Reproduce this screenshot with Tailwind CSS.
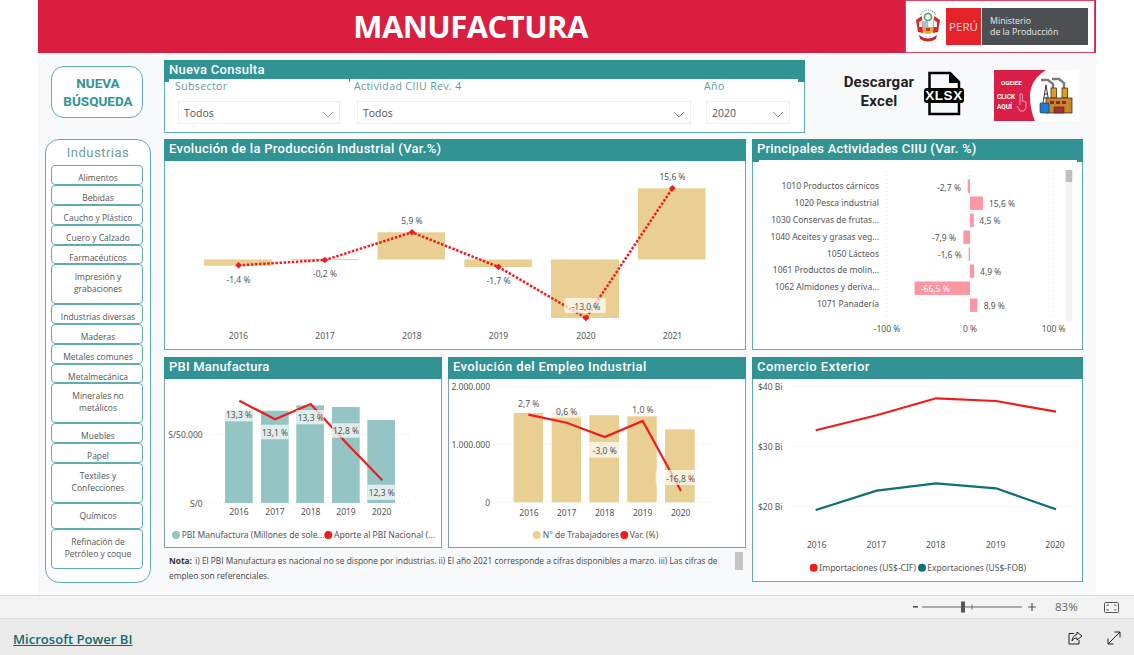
<!DOCTYPE html>
<html lang="es">
<head>
<meta charset="UTF-8">
<title>Manufactura</title>
<script src="https://cdn.jsdelivr.net/npm/@tailwindcss/browser@4"></script>
</head>
<body class="bg-white w-[1134px] h-[655px] overflow-hidden flex flex-col font-['Open_Sans',sans-serif] text-[#555]">

<main class="ml-[38px] w-[1058px] h-[595px] bg-[#f8f9fb] flex flex-col">
  <!-- header -->
  <header class="h-[53px] bg-[#d91e3f] flex items-center shrink-0">
    <h1 class="w-[865px] mr-[2px] text-center text-white font-bold text-[31px] tracking-[-0.55px] leading-none">MANUFACTURA</h1>
    <div class="w-[190px] h-[53px] bg-white border border-[#e2405c] flex items-center pl-[9px]">
      <svg width="26" height="38" viewBox="0 0 26 38">
        <path d="M5 7 A9 9 0 0 1 21 7" fill="none" stroke="#999" stroke-width="1.2" stroke-dasharray="1 1"/>
        <path d="M1 12 L7 8 L8 25 L3 24 Z" fill="#d9262c"/>
        <path d="M25 12 L19 8 L18 25 L23 24 Z" fill="#d9262c"/>
        <path d="M4 14 L7 12 V19 L4 19 Z" fill="#f4f4f4"/>
        <path d="M22 14 L19 12 V19 L22 19 Z" fill="#f4f4f4"/>
        <circle cx="13" cy="9" r="3.5" fill="none" stroke="#4f9a6a" stroke-width="1.6"/>
        <rect x="8" y="13" width="5" height="6" fill="#8fd0d8"/>
        <rect x="13" y="13" width="5" height="6" fill="#f3f3f3"/>
        <path d="M8 19 H18 V24 Q13 28 8 24 Z" fill="#e8a92c"/>
        <path d="M11 20 H15 V23 H11 Z" fill="#c9362c"/>
        <path d="M4 27 Q13 34 22 27 L21 31 Q13 36 5 31 Z" fill="#c9262c"/>
      </svg>
      <div class="ml-[5px] w-[35px] h-[37px] bg-[#e52228] text-[#fbd9d9] text-[11.5px] flex items-center justify-center">PERÚ</div>
      <div class="ml-[1px] w-[106px] h-[37px] bg-[#4d5052] text-[#e8e8e8] text-[8.8px] leading-[11px] flex flex-col justify-center pl-[8px]"><span>Ministerio</span><span>de la Producción</span></div>
    </div>
  </header>

  <div class="flex pl-[7px] gap-[13px]">
    <!-- left column -->
    <div class="w-[106px] flex flex-col items-center shrink-0">
      <button class="mt-[13px] -ml-[2px] w-[92px] h-[52px] rounded-[13px] border border-[#5fadad] bg-white text-[#319393] font-['Roboto',sans-serif] font-bold text-[13.5px] leading-[18px] pl-[2px]">NUEVA<br>BÚSQUEDA</button>
      <nav class="mt-[21px] w-[106px] h-[444px] rounded-[14px] border border-[#5fadad] bg-white flex flex-col items-center pr-[2px] text-[#555] text-[8.5px] leading-[12px]">
        <div class="h-[25px] pt-[5px] pl-[2px] text-[13px] leading-[16px] tracking-[0.5px] text-[#6f9c9c] font-['Roboto',sans-serif]">Industrias</div>
        <a class="w-[92px] h-[20px] shrink-0 border border-[#5fadad] rounded-[4px] text-center pt-[6px] pl-[2px]">Alimentos</a>
        <a class="w-[92px] h-[20px] shrink-0 border border-[#5fadad] rounded-[4px] text-center pt-[6px] pl-[2px]">Bebidas</a>
        <a class="w-[92px] h-[20px] shrink-0 border border-[#5fadad] rounded-[4px] text-center pt-[6px] pl-[2px]">Caucho y Plástico</a>
        <a class="w-[92px] h-[20px] shrink-0 border border-[#5fadad] rounded-[4px] text-center pt-[6px] pl-[2px]">Cuero y Calzado</a>
        <a class="w-[92px] h-[19px] shrink-0 border border-[#5fadad] rounded-[4px] text-center pt-[6px] pl-[2px]">Farmacéuticos</a>
        <a class="w-[92px] h-[40px] shrink-0 border border-[#5fadad] rounded-[4px] text-center pt-[6px] pl-[2px]">Impresión y<br>grabaciones</a>
        <a class="w-[92px] h-[20px] shrink-0 border border-[#5fadad] rounded-[4px] text-center pt-[6px] pl-[2px]">Industrias diversas</a>
        <a class="w-[92px] h-[20px] shrink-0 border border-[#5fadad] rounded-[4px] text-center pt-[6px] pl-[2px]">Maderas</a>
        <a class="w-[92px] h-[20px] shrink-0 border border-[#5fadad] rounded-[4px] text-center pt-[6px] pl-[2px]">Metales comunes</a>
        <a class="w-[92px] h-[19px] shrink-0 border border-[#5fadad] rounded-[4px] text-center pt-[6px] pl-[2px]">Metalmecánica</a>
        <a class="w-[92px] h-[40px] shrink-0 border border-[#5fadad] rounded-[4px] text-center pt-[6px] pl-[2px]">Minerales no<br>metálicos</a>
        <a class="w-[92px] h-[20px] shrink-0 border border-[#5fadad] rounded-[4px] text-center pt-[6px] pl-[2px]">Muebles</a>
        <a class="w-[92px] h-[20px] shrink-0 border border-[#5fadad] rounded-[4px] text-center pt-[6px] pl-[2px]">Papel</a>
        <a class="w-[92px] h-[40px] shrink-0 border border-[#5fadad] rounded-[4px] text-center pt-[6px] pl-[2px]">Textiles y<br>Confecciones</a>
        <a class="w-[92px] h-[26px] shrink-0 border border-[#5fadad] rounded-[4px] text-center pt-[6px] pl-[2px]">Químicos</a>
        <a class="w-[92px] h-[40px] shrink-0 border border-[#5fadad] rounded-[4px] text-center pt-[6px] pl-[2px]">Refinación de<br>Petróleo y coque</a>
      </nav>
    </div>

    <!-- right column -->
    <div class="w-[919px] pt-[7px] flex flex-col">
      <!-- row 1 -->
      <div class="flex h-[73px]">
        <section class="w-[641px] border border-[#5fadad] bg-white relative">
          <div class="h-[19px] -mt-px -mx-px bg-[#319393] text-white font-['Roboto',sans-serif] font-medium text-[13px] leading-[19px] tracking-[0.3px] pl-[5px]">Nueva Consulta</div>
          <!-- little header notches -->
          <div class="absolute left-[-1px] top-[18px] w-[5px] h-[3px] bg-[#319393]"></div>
          <div class="absolute left-[184px] top-[18px] w-[1px] h-[3px] bg-[#319393]"></div>
          <div class="absolute right-[-1px] top-[18px] w-[7px] h-[3px] bg-[#319393]"></div>
          <div class="flex text-[#5f9a9a] text-[10.5px] tracking-[0.4px]">
            <div class="w-[189px] pl-[10px]">
              <div class="h-[19px] leading-[14px]">Subsector</div>
              <div class="mt-[3px] ml-[3px] w-[162px] h-[23px] border border-[#eeeeee] flex items-center justify-between px-[5px] pt-[3px] text-[#555] tracking-normal">Todos
                <svg width="12" height="7" viewBox="0 0 12 7"><path d="M1 1 L6 6 L11 1" fill="none" stroke="#777" stroke-width="0.8"/></svg></div>
            </div>
            <div class="w-[350px]">
              <div class="h-[19px] leading-[14px]">Actividad CIIU Rev. 4</div>
              <div class="mt-[3px] ml-[3px] w-[334px] h-[23px] border border-[#eeeeee] flex items-center justify-between px-[5px] pt-[3px] text-[#555] tracking-normal">Todos
                <svg width="12" height="7" viewBox="0 0 12 7"><path d="M1 1 L6 6 L11 1" fill="none" stroke="#777" stroke-width="0.8"/></svg></div>
            </div>
            <div class="w-[90px]">
              <div class="h-[19px] leading-[14px]">Año</div>
              <div class="mt-[3px] ml-[2px] w-[84px] h-[23px] border border-[#eeeeee] flex items-center justify-between px-[5px] pt-[3px] text-[#555] tracking-normal">2020
                <svg width="12" height="7" viewBox="0 0 12 7"><path d="M1 1 L6 6 L11 1" fill="none" stroke="#777" stroke-width="0.8"/></svg></div>
            </div>
          </div>
        </section>
        <div class="w-[76px] ml-[36px] mt-[13px] text-center text-[#222] font-bold text-[15px] leading-[19px] font-['Roboto',sans-serif] tracking-[0.2px]">Descargar<br>Excel</div>
        <svg class="ml-[7px] mt-[11px]" width="40" height="45" viewBox="0 0 40 45">
          <path d="M5.5 18 V2 H26 L35 11 V18 M5.5 32 V43 H35 V32" fill="none" stroke="#000" stroke-width="2.5"/>
          <path d="M25 1 V12 H36 Z" fill="#000"/>
          <rect x="0" y="17" width="40" height="15" rx="3" fill="#000"/>
          <text x="20" y="29" text-anchor="middle" fill="#fff" font-size="13.5" font-weight="700" font-family="Liberation Sans" letter-spacing="0.6">XLSX</text>
        </svg>
        <div class="ml-[30px] mt-[10px] w-[85px] h-[51px] bg-white">
          <svg width="85" height="51" viewBox="0 0 85 51">
            <path d="M0 0 H52 Q36 10 36 26 Q36 40 41 51 H0 Z" fill="#d91e47"/>
            <text x="7" y="15" fill="#fff" font-size="6.2" font-weight="700" font-family="Roboto">OGEIEE</text>
            <text x="3" y="28.5" fill="#fff" font-size="6.5" font-weight="700" font-family="Roboto">CLICK</text>
            <text x="3" y="38.5" fill="#fff" font-size="6.5" font-weight="700" font-family="Roboto">AQUÍ</text>
            <path d="M26 25 V35 M26 25 a1 1 0 0 1 2.4 0 V31 L32 32 V38 L30 41 H26 L23 36" fill="none" stroke="#f5c0cc" stroke-width="0.8"/>
            <path d="M47 10 H54 L59 14 V18 M58 9 H65 L70 13 V18" fill="none" stroke="#7c7c7c" stroke-width="2.4"/>
            <rect x="57" y="18" width="5.5" height="10" fill="#e79a1f" stroke="#222" stroke-width="0.7"/>
            <rect x="68" y="18" width="5.5" height="10" fill="#e79a1f" stroke="#222" stroke-width="0.7"/>
            <path d="M52 15 L49 33 M52 15 L55 33 M50 24 H54 M49.5 28 L54.5 28" fill="none" stroke="#222" stroke-width="0.9"/>
            <rect x="52" y="28" width="26" height="15" fill="#c9862a" stroke="#222" stroke-width="0.7"/>
            <rect x="56" y="31" width="4" height="3" fill="#8a2a2a"/>
            <rect x="62" y="31" width="4" height="3" fill="#8a2a2a"/>
            <rect x="68" y="31" width="4" height="3" fill="#8a2a2a"/>
            <rect x="60" y="37" width="10" height="6" fill="#a33030" stroke="#222" stroke-width="0.5"/>
            <rect x="46" y="33" width="9" height="10" rx="1" fill="#1f7fd0" stroke="#222" stroke-width="0.6"/>
          </svg>
        </div>
      </div>

      <!-- row 2 -->
      <div class="flex gap-[6px] mt-[6px]">
        <section class="w-[582px] h-[211px] border border-[#5fadad] bg-white flex flex-col">
          <div class="h-[22px] shrink-0 -mt-px -mx-px bg-[#319393] text-white font-['Roboto',sans-serif] font-medium text-[13px] leading-[19px] tracking-[0.3px] pl-[5px]">Evolución de la Producción Industrial (Var.%)</div>
          <svg width="580" height="188" viewBox="165 161 580 188" font-family="Noto Sans" font-size="8.5" fill="#555" text-anchor="middle">
            <g fill="#e9cf91">
              <rect x="204" y="259.5" width="68" height="6.2"/>
              <rect x="291" y="259" width="67" height="1"/>
              <rect x="377.5" y="232.3" width="67.5" height="27.2"/>
              <rect x="464.4" y="259.5" width="67.6" height="7.5"/>
              <rect x="551" y="259.5" width="68" height="58.5"/>
              <rect x="638" y="188.3" width="67.5" height="71.2"/>
            </g>
            <polyline points="238.6,265.3 324.8,260 412,232.3 498.6,267 586,318 672.4,188.3" fill="none" stroke="#f01c1c" stroke-width="2.5" stroke-dasharray="2.5 1.6"/>
            <g fill="#f01c1c">
              <path d="M238.6 262 l3.4 3.3 -3.4 3.3 -3.4 -3.3z"/>
              <path d="M324.8 256.7 l3.4 3.3 -3.4 3.3 -3.4 -3.3z"/>
              <path d="M412 229 l3.4 3.3 -3.4 3.3 -3.4 -3.3z"/>
              <path d="M498.6 263.7 l3.4 3.3 -3.4 3.3 -3.4 -3.3z"/>
              <path d="M586 314.7 l3.4 3.3 -3.4 3.3 -3.4 -3.3z"/>
              <path d="M672.4 185 l3.4 3.3 -3.4 3.3 -3.4 -3.3z"/>
            </g>
            <rect x="564.4" y="298" width="41.4" height="15" rx="2" fill="#fff" fill-opacity="0.7"/>
            <text x="238.5" y="283">-1,4 %</text>
            <text x="325" y="277">-0,2 %</text>
            <text x="412" y="223.5">5,9 %</text>
            <text x="498.5" y="284">-1,7 %</text>
            <text x="586" y="310">-13,0 %</text>
            <text x="672.5" y="180">15,6 %</text>
            <text x="238.5" y="339">2016</text>
            <text x="325" y="339">2017</text>
            <text x="412" y="339">2018</text>
            <text x="498.5" y="339">2019</text>
            <text x="586" y="339">2020</text>
            <text x="672.5" y="339">2021</text>
          </svg>
        </section>
        <section class="w-[331px] h-[211px] border border-[#5fadad] bg-white flex flex-col relative">
          <div class="h-[21px] shrink-0 -mt-px -mx-px bg-[#319393] text-white font-['Roboto',sans-serif] font-medium text-[13px] leading-[19px] tracking-[0.22px] pl-[5px]">Principales Actividades CIIU (Var. %)</div>
          <div class="absolute left-[-1px] top-[20px] w-[7px] h-[2px] bg-[#319393]"></div>
          <div class="absolute right-[-1px] top-[20px] w-[6px] h-[2px] bg-[#319393]"></div>
          <svg width="329" height="189" viewBox="753 160 329 189" font-family="Noto Sans" font-size="8.5" fill="#555">
            <g stroke="#d5d5d5" stroke-width="0.8" stroke-dasharray="1 3">
              <line x1="886.7" y1="171" x2="886.7" y2="318"/>
              <line x1="970" y1="171" x2="970" y2="318"/>
              <line x1="1053.3" y1="171" x2="1053.3" y2="318"/>
            </g>
            <g fill="#fd96a3">
              <rect x="967.7" y="179.5" width="2.3" height="13.4"/>
              <rect x="970" y="196.5" width="13" height="13.4"/>
              <rect x="970" y="213.5" width="3.8" height="13.4"/>
              <rect x="963.4" y="230.5" width="6.6" height="13.4"/>
              <rect x="968.7" y="247.5" width="1.3" height="13.4"/>
              <rect x="970" y="264.5" width="4.1" height="13.4"/>
              <rect x="914.6" y="281.5" width="55.4" height="13.4"/>
              <rect x="970" y="298.5" width="7.4" height="13.4"/>
            </g>
            <g text-anchor="end">
              <text x="879" y="189">1010 Productos cárnicos</text>
              <text x="879" y="206">1020 Pesca industrial</text>
              <text x="879" y="223">1030 Conservas de frutas...</text>
              <text x="879" y="240">1040 Aceites y grasas veg...</text>
              <text x="879" y="257">1050 Lácteos</text>
              <text x="879" y="273">1061 Productos de molin...</text>
              <text x="879" y="290">1062 Almidones y deriva...</text>
              <text x="879" y="307">1071 Panadería</text>
            </g>
            <g text-anchor="middle">
              <text x="949" y="191">-2,7 %</text>
              <text x="1002" y="207">15,6 %</text>
              <text x="990" y="224">4,5 %</text>
              <text x="944" y="241">-7,9 %</text>
              <text x="949.7" y="257.5">-1,6 %</text>
              <text x="990.7" y="275">4,9 %</text>
              <text x="935.3" y="291.5" fill="#fff">-66,5 %</text>
              <text x="994.3" y="309">8,9 %</text>
              <text x="887" y="332">-100 %</text>
              <text x="970" y="332">0 %</text>
              <text x="1053.7" y="332">100 %</text>
            </g>
            <rect x="1065.7" y="170" width="6.6" height="150.7" fill="#f3f3f3"/>
            <rect x="1065.7" y="170" width="6.6" height="12" fill="#bfbfbf"/>
          </svg>
        </section>
      </div>

      <!-- row 3 -->
      <div class="flex gap-[6px] mt-[7px]">
        <div class="w-[582px] flex flex-col">
          <div class="flex gap-[6px]">
            <section class="w-[278px] h-[191px] border border-[#8a9cbb] bg-white flex flex-col">
              <div class="h-[22px] shrink-0 -mt-px -mx-px bg-[#319393] text-white font-['Roboto',sans-serif] font-medium text-[13px] leading-[19px] tracking-[0.2px] pl-[5px]">PBI Manufactura</div>
              <svg width="276" height="168" viewBox="165 379 276 168" font-family="Noto Sans" font-size="8.5" fill="#555">
                <g stroke="#d5d5d5" stroke-width="0.8" stroke-dasharray="1 3">
                  <line x1="211.7" y1="434.3" x2="410" y2="434.3"/>
                  <line x1="211.7" y1="503" x2="410" y2="503"/>
                </g>
                <g fill="#95c4c4">
                  <rect x="225" y="410.7" width="27.7" height="92.3"/>
                  <rect x="261" y="410.7" width="27.7" height="92.3"/>
                  <rect x="296.3" y="405.3" width="27.7" height="97.7"/>
                  <rect x="332" y="407" width="27.7" height="96"/>
                  <rect x="367.3" y="420" width="27.7" height="83"/>
                </g>
                <polyline points="239.3,400.7 275,419.3 310.7,404 346.3,443 382.3,480.3" fill="none" stroke="#f01c1c" stroke-width="2.2"/>
                <g fill="#fff" fill-opacity="0.7">
                  <rect x="225" y="410.7" width="27.7" height="10.7"/>
                  <rect x="261" y="424.7" width="27.7" height="14.6"/>
                  <rect x="296.3" y="410" width="27.7" height="14.3"/>
                  <rect x="332" y="423.3" width="27.7" height="14.4"/>
                  <rect x="367.3" y="484.7" width="27.7" height="15.3"/>
                </g>
                <g text-anchor="middle">
                  <text x="239" y="417.5">13,3 %</text>
                  <text x="275" y="436">13,1 %</text>
                  <text x="310.7" y="421">13,3 %</text>
                  <text x="346" y="434">12,8 %</text>
                  <text x="381.7" y="496">12,3 %</text>
                  <text x="239" y="515">2016</text>
                  <text x="275" y="515">2017</text>
                  <text x="310.7" y="515">2018</text>
                  <text x="346" y="515">2019</text>
                  <text x="381.7" y="515">2020</text>
                </g>
                <text x="202.7" y="438" text-anchor="end">S/50.000</text>
                <text x="202.7" y="507" text-anchor="end">S/0</text>
                <circle cx="176" cy="535" r="4" fill="#95c4c4"/>
                <text x="181.7" y="538">PBI Manufactura (Millones de sole...</text>
                <circle cx="328.3" cy="535" r="4" fill="#f01c1c"/>
                <text x="334" y="538">Aporte al PBI Nacional (...</text>
              </svg>
            </section>
            <section class="w-[298px] h-[191px] border border-[#8a9cbb] bg-white flex flex-col">
              <div class="h-[22px] shrink-0 -mt-px -mx-px bg-[#319393] text-white font-['Roboto',sans-serif] font-medium text-[13px] leading-[19px] tracking-[0.38px] pl-[5px]">Evolución del Empleo Industrial</div>
              <svg width="296" height="168" viewBox="449 379 296 168" font-family="Noto Sans" font-size="8.5" fill="#555">
                <g stroke="#d5d5d5" stroke-width="0.8" stroke-dasharray="1 3">
                  <line x1="498" y1="386.7" x2="711.7" y2="386.7"/>
                  <line x1="498" y1="444.3" x2="711.7" y2="444.3"/>
                  <line x1="498" y1="502.3" x2="711.7" y2="502.3"/>
                </g>
                <g fill="#e9cf91">
                  <rect x="513.7" y="413" width="29.3" height="89.3"/>
                  <rect x="551.7" y="413" width="29.3" height="89.3"/>
                  <rect x="589.3" y="415.3" width="29.7" height="87"/>
                  <rect x="627.3" y="416.3" width="29.4" height="86"/>
                  <rect x="665" y="429.3" width="29.7" height="73"/>
                </g>
                <polyline points="528.3,414.7 566.7,422.7 604.7,437 642.7,421 681,491" fill="none" stroke="#f01c1c" stroke-width="2.2"/>
                <g fill="#fff" fill-opacity="0.7">
                  <rect x="551.7" y="408.3" width="29.3" height="9.4"/>
                  <rect x="589.3" y="442" width="29.7" height="15.7"/>
                  <rect x="655.7" y="470" width="41" height="15" rx="2"/>
                </g>
                <g text-anchor="middle">
                  <text x="528.7" y="406.5">2,7 %</text>
                  <text x="566.7" y="415">0,6 %</text>
                  <text x="604.7" y="454">-3,0 %</text>
                  <text x="643" y="413">1,0 %</text>
                  <text x="680.7" y="482">-16,8 %</text>
                  <text x="529" y="516">2016</text>
                  <text x="566.7" y="516">2017</text>
                  <text x="604.7" y="516">2018</text>
                  <text x="642.7" y="516">2019</text>
                  <text x="680.7" y="516">2020</text>
                </g>
                <g text-anchor="end">
                  <text x="490" y="390">2.000.000</text>
                  <text x="490" y="448">1.000.000</text>
                  <text x="490" y="506">0</text>
                </g>
                <circle cx="536.7" cy="535" r="4" fill="#e9cf91"/>
                <text x="542.7" y="538">N° de Trabajadores</text>
                <circle cx="624.3" cy="535" r="4" fill="#f01c1c"/>
                <text x="629.7" y="538">Var. (%)</text>
              </svg>
            </section>
          </div>
          <div class="flex mt-[4px] pl-[5px]">
            <p class="w-[552px] h-[30px] text-[8.35px] leading-[15px] pt-[1px] text-[#444]"><b class="text-[#333] mr-[1px]">Nota:</b> i) El PBI Manufactura es nacional no se dispone por industrias. ii) El año 2021 corresponde a cifras disponibles a marzo. iii) Las cifras de empleo son referenciales.</p>
            <div class="ml-[14px] w-[8px] h-[18px] bg-[#c4c4c4]"></div>
          </div>
        </div>
        <section class="w-[331px] h-[225px] border border-[#5fadad] bg-white flex flex-col">
          <div class="h-[22px] shrink-0 -mt-px -mx-px bg-[#319393] text-white font-['Roboto',sans-serif] font-medium text-[13px] leading-[19px] tracking-[0.5px] pl-[5px]">Comercio Exterior</div>
          <svg width="329" height="202" viewBox="753 379 329 202" font-family="Noto Sans" font-size="8.5" fill="#555">
            <g stroke="#d5d5d5" stroke-width="0.8" stroke-dasharray="1 3">
              <line x1="792.7" y1="386.3" x2="1076.7" y2="386.3"/>
              <line x1="792.7" y1="446.3" x2="1076.7" y2="446.3"/>
              <line x1="792.7" y1="506.3" x2="1076.7" y2="506.3"/>
            </g>
            <polyline points="815.7,430.3 876.7,415.3 936,398.3 996,401 1056,411.7" fill="none" stroke="#f01c1c" stroke-width="2.2"/>
            <polyline points="815.7,510 876.7,490.7 936,483.3 996,488.3 1056,509.3" fill="none" stroke="#0e7070" stroke-width="2.2"/>
            <text x="758" y="390">$40 Bi</text>
            <text x="758" y="450">$30 Bi</text>
            <text x="758" y="510">$20 Bi</text>
            <g text-anchor="middle">
              <text x="816.7" y="548">2016</text>
              <text x="876.3" y="548">2017</text>
              <text x="935.7" y="548">2018</text>
              <text x="995.7" y="548">2019</text>
              <text x="1055" y="548">2020</text>
            </g>
            <circle cx="813.7" cy="567.7" r="4" fill="#f01c1c"/>
            <text x="819.3" y="571">Importaciones (US$-CIF)</text>
            <circle cx="922" cy="567.7" r="4" fill="#0e7070"/>
            <text x="927.3" y="571">Exportaciones (US$-FOB)</text>
          </svg>
        </section>
      </div>
    </div>
  </div>
</main>

<!-- zoom bar -->
<div class="h-[24px] shrink-0 bg-[#f3f3f3] border-y border-[#d9d9d9] flex items-center text-[#666]">
  <svg class="ml-[912px]" width="126" height="14" viewBox="0 0 126 14">
    <rect x="1" y="6" width="5" height="1.6" fill="#555"/>
    <line x1="10" y1="7" x2="110" y2="7" stroke="#666" stroke-width="1"/>
    <rect x="49" y="1.5" width="4" height="11" fill="#555"/>
    <line x1="60" y1="4.5" x2="60" y2="9.5" stroke="#666" stroke-width="1"/>
    <path d="M116 7 H124 M120 3 V11" stroke="#555" stroke-width="1.2"/>
  </svg>
  <span class="ml-[17px] text-[11.5px] w-[30px]">83%</span>
  <svg class="ml-[19px]" width="15" height="11" viewBox="0 0 15 11">
    <rect x="0.5" y="0.5" width="14" height="10" rx="1" fill="none" stroke="#555"/>
    <path d="M3 4 V3 H5 M10 3 H12 V4 M3 7 V8 H5 M10 8 H12 V7" fill="none" stroke="#555" stroke-width="0.8"/>
  </svg>
</div>

<!-- footer -->
<footer class="flex-1 bg-[#eaeaea] flex items-center pt-[2px]">
  <a class="ml-[13px] mt-[3px] w-[120px] text-[13.1px] font-semibold underline text-[#106b70] whitespace-nowrap">Microsoft Power BI</a>
  <svg class="ml-[935px]" width="15" height="14" viewBox="0 0 15 14">
    <path d="M6 2.5 H1 V13 H11 V9" fill="none" stroke="#222" stroke-width="1"/>
    <path d="M9 1 L14 5 L9 9 V7 C6.5 7 5 8 4 10 C4 7 6 4 9 3.5 Z" fill="none" stroke="#222" stroke-width="1"/>
  </svg>
  <svg class="ml-[24px]" width="14" height="14" viewBox="0 0 14 14">
    <path d="M1 13 L13 1 M7.5 1 H13 V6.5 M1 7.5 V13 H6.5" fill="none" stroke="#222" stroke-width="1"/>
  </svg>
</footer>
</body>
</html>
